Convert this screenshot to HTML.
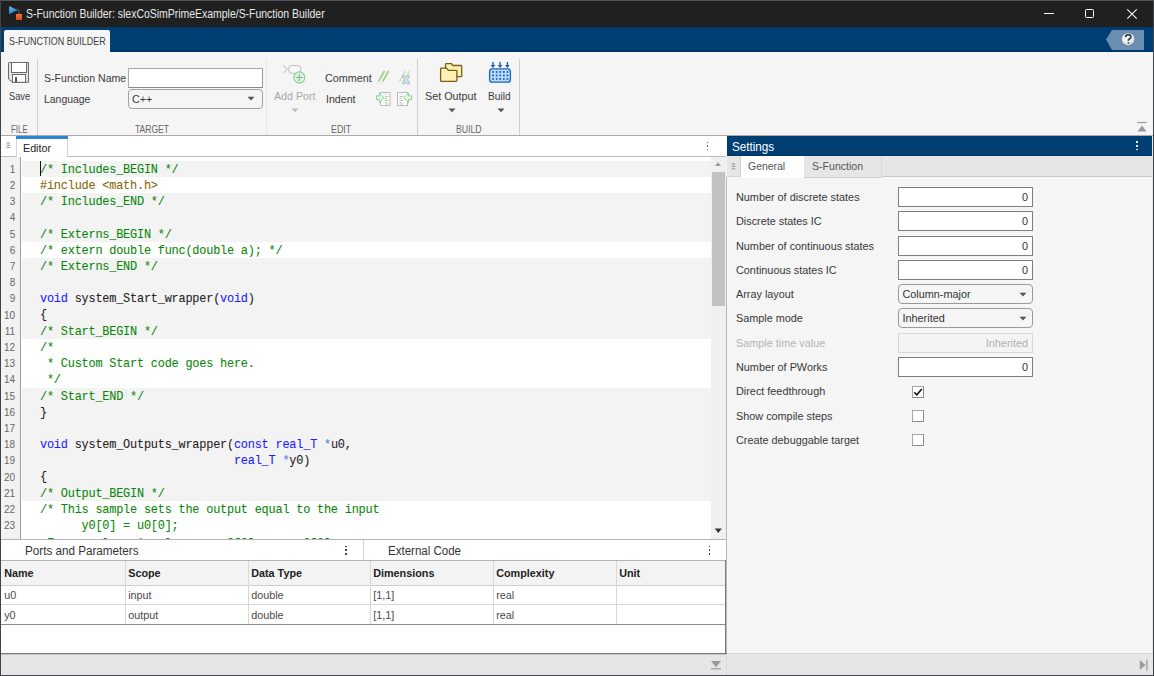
<!DOCTYPE html>
<html><head><meta charset="utf-8">
<style>
*{margin:0;padding:0;box-sizing:border-box}
html,body{width:1154px;height:676px;overflow:hidden;background:#f5f5f5;font-family:"Liberation Sans",sans-serif;}
.a{position:absolute}
#win{position:absolute;left:0;top:0;width:1154px;height:676px;overflow:hidden}
.t{position:absolute;white-space:pre;line-height:1}
.m{font-family:"Liberation Mono",monospace}
svg{position:absolute;overflow:visible}
</style></head><body><div id="win">
<div class="a" style="left:0px;top:0px;width:1154px;height:27px;background:#202020"></div>
<div class="a" style="left:0px;top:0px;width:1154px;height:1px;background:#50555c"></div>
<svg style="left:0;top:0" width="40" height="27" viewBox="0 0 40 27">
<defs><linearGradient id="gb" x1="0" y1="0" x2="1" y2="1"><stop offset="0" stop-color="#5fc3f0"/><stop offset="1" stop-color="#1a6fc0"/></linearGradient>
<linearGradient id="go" x1="0" y1="0" x2="0" y2="1"><stop offset="0" stop-color="#f07a3a"/><stop offset="1" stop-color="#d9441a"/></linearGradient></defs>
<path d="M8.5 10 L17.5 10 L19 10 L19 15" stroke="#555" stroke-width="1.2" fill="none"/>
<path d="M9.2 6 L17.5 9.9 L9.2 13.9 Z" fill="url(#gb)"/>
<rect x="16" y="14" width="6" height="6" fill="url(#go)"/>
</svg>
<div class="t" style="left:26.00px;top:8px;font-size:12.3px;color:#e8e8e8;transform:scaleX(0.8501);transform-origin:0 0;">S-Function Builder: slexCoSimPrimeExample/S-Function Builder</div>
<div class="a" style="left:1043.5px;top:13px;width:10px;height:1px;background:#fff"></div>
<div class="a" style="left:1085px;top:9px;width:9px;height:9px;border:1px solid #fff;border-radius:1.5px"></div>
<svg style="left:1127px;top:9px" width="10" height="10" viewBox="0 0 10 10"><path d="M0.3 0.3 L9.7 9.7 M9.7 0.3 L0.3 9.7" stroke="#fff" stroke-width="1.05"/></svg>
<div class="a" style="left:0px;top:27px;width:1154px;height:25px;background:linear-gradient(#003a6b 0,#003f74 3px,#003f74 22px,#002f62 25px)"></div>
<div class="a" style="left:4px;top:30px;width:106px;height:22px;background:#f5f5f5;border-radius:2px 2px 0 0"></div>
<div class="t" style="left:8.80px;top:36px;font-size:11.3px;color:#404040;transform:scaleX(0.7940);transform-origin:0 0;">S-FUNCTION BUILDER</div>
<svg style="left:1100px;top:27px" width="54" height="25" viewBox="1100 27 54 25">
<defs><radialGradient id="gh" cx="0.4" cy="0.3" r="0.8"><stop offset="0" stop-color="#ffffff"/><stop offset="0.6" stop-color="#e8ecf0"/><stop offset="1" stop-color="#a8b0b8"/></radialGradient></defs>
<path d="M1106 39.5 L1112 30 L1144 30 L1144 50 L1112 50 Z" fill="#6a8eb1"/>
<circle cx="1128.2" cy="39.5" r="6.8" fill="#2a3e55" opacity="0.5"/>
<circle cx="1128.2" cy="39.3" r="6.4" fill="url(#gh)"/>
<path d="M1125.6 37.2 Q1125.8 34.6 1128.3 34.6 Q1130.9 34.7 1130.8 36.9 Q1130.7 38.3 1129.3 39 Q1128.4 39.5 1128.4 40.8" stroke="#3b4450" stroke-width="1.9" fill="none"/>
<circle cx="1128.4" cy="42.8" r="0.9" fill="#3b4450"/>
</svg>
<div class="a" style="left:0px;top:52px;width:1154px;height:83px;background:#f5f5f5"></div>
<div class="a" style="left:0px;top:135px;width:1154px;height:1px;background:#a9a9a9"></div>
<div class="a" style="left:37px;top:59px;width:1px;height:76px;background:#cdcdcd"></div>
<div class="a" style="left:417px;top:59px;width:1px;height:76px;background:#cdcdcd"></div>
<div class="a" style="left:519px;top:59px;width:1px;height:76px;background:#cdcdcd"></div>
<div class="a" style="left:266px;top:59px;width:1px;height:76px;background:#e6e6e6"></div>
<svg style="left:0;top:52px" width="40" height="40" viewBox="0 52 40 40">
<path d="M9 62.5 L28.5 62.5 L28.5 82.3 L12.5 82.3 L8.5 79 L8.5 63 Z" fill="#e2e2e2" stroke="#6a6a6a" stroke-width="1"/>
<rect x="11.5" y="62.5" width="15" height="10" fill="#fff" stroke="#6a6a6a" stroke-width="1"/>
<rect x="12.5" y="74.5" width="13" height="7.8" fill="#fff" stroke="#6a6a6a" stroke-width="1"/>
<rect x="15" y="77" width="2" height="5" fill="#555"/>
</svg>
<div class="t" style="left:8.50px;top:91px;font-size:11.3px;color:#3a3a3a;transform:scaleX(0.8232);transform-origin:0 0;">Save</div>
<div class="t" style="left:10.90px;top:124px;font-size:11px;color:#666;transform:scaleX(0.7188);transform-origin:0 0;">FILE</div>
<div class="t" style="left:43.90px;top:73px;font-size:11.3px;color:#3a3a3a;transform:scaleX(0.9349);transform-origin:0 0;">S-Function Name</div>
<div class="t" style="left:43.90px;top:94px;font-size:11.3px;color:#3a3a3a;transform:scaleX(0.9229);transform-origin:0 0;">Language</div>
<div class="a" style="left:128px;top:68px;width:135px;height:20px;background:#fff;border:1px solid #a8a8a8;border-bottom-color:#8a8a8a;border-right-color:#9a9a9a"></div>
<div class="a" style="left:128px;top:89px;width:135px;height:20px;background:#f5f5f5;border:1px solid #a0a0a0;border-radius:4px"></div>
<div class="t" style="left:132.20px;top:94px;font-size:11.3px;color:#3a3a3a;transform:scaleX(0.9552);transform-origin:0 0;">C++</div>
<svg style="left:247px;top:96px" width="8" height="5" viewBox="0 0 8 5"><path d="M0.5 0.8 L7.5 0.8 L4 4.6 Z" fill="#555"/></svg>
<div class="t" style="left:134.70px;top:124px;font-size:11px;color:#666;transform:scaleX(0.7764);transform-origin:0 0;">TARGET</div>
<svg style="left:270px;top:58px" width="40" height="30" viewBox="270 58 40 30">
<path d="M283.2 65.5 L287.2 69.3 L283.2 73" stroke="#b4b4b4" stroke-width="1" fill="none"/>
<rect x="288.5" y="65.5" width="12.3" height="7.8" rx="3.6" fill="#f8f8f8" stroke="#bcbcbc" stroke-width="1"/>
<circle cx="299.3" cy="77.5" r="5.6" fill="#def3df" stroke="#86cf95" stroke-width="1.1"/>
<path d="M295.8 77.5 L302.8 77.5 M299.3 74 L299.3 81" stroke="#8fad95" stroke-width="1.1"/>
</svg>
<div class="t" style="left:273.90px;top:91px;font-size:11.3px;color:#a8a8a8;transform:scaleX(0.9416);transform-origin:0 0;">Add Port</div>
<svg style="left:291px;top:108px" width="8" height="5" viewBox="0 0 8 5"><path d="M0.5 0.6 L7.5 0.6 L4 4.2 Z" fill="#bdbdbd"/></svg>
<div class="t" style="left:325.20px;top:73px;font-size:11.3px;color:#3a3a3a;transform:scaleX(0.9554);transform-origin:0 0;">Comment</div>
<div class="t" style="left:325.50px;top:94px;font-size:11.3px;color:#3a3a3a;transform:scaleX(0.9391);transform-origin:0 0;">Indent</div>
<svg style="left:370px;top:60px" width="50" height="50" viewBox="370 60 50 50">
<path d="M384.4 71 L378.4 81.6 M388.6 71 L382.6 81.6" stroke="#a9d08f" stroke-width="1.9"/>
<path d="M376.5 83.5 L383.5 83.5" stroke="#e4e4e4" stroke-width="0.8"/>
<path d="M405.4 71 L399.4 81.6 M409.6 71 L403.6 81.6" stroke="#cfe3bd" stroke-width="1.7"/>
<path d="M402.3 76.3 L404.2 75.6 L406 77.6 L407.8 75.6 L409.7 76.3 L407.5 79.9 L409.7 83.3 L407.8 84.2 L406 82.1 L404.2 84.2 L402.3 83.3 L404.5 79.9 Z" fill="#d3e3ef" stroke="#9fb0c2" stroke-width="0.9"/>
<rect x="380.5" y="92.5" width="9.5" height="13" fill="#fff" stroke="#bababa" stroke-width="1"/>
<path d="M383.5 94.5 L388 94.5" stroke="#e0e0e0" stroke-width="0.9"/>
<path d="M385 96.5 L388.5 96.5 M385 98.5 L387 98.5 M385 100.5 L388.5 100.5 M385 102.5 L386.5 102.5 M385 104 L388.5 104" stroke="#9fc89f" stroke-width="0.9"/>
<path d="M376.5 95.8 L379.5 95.8 L379.5 92.9 L383.9 97.7 L379.5 102.5 L379.5 99.6 L376.5 99.6 Z" fill="#e2f6e2" stroke="#8fd19c" stroke-width="1"/>
<rect x="397.5" y="92.5" width="10" height="13" fill="#fff" stroke="#bababa" stroke-width="1"/>
<path d="M399.5 94.5 L403.5 94.5" stroke="#e0e0e0" stroke-width="0.9"/>
<path d="M399.5 96.5 L403 96.5 M399.5 98.5 L401.5 98.5 M399.5 100.5 L403 100.5 M399.5 102.5 L401 102.5 M399.5 104 L403 104" stroke="#9fc89f" stroke-width="0.9"/>
<path d="M411.5 95.8 L408.5 95.8 L408.5 92.9 L403.9 97.7 L408.5 102.5 L408.5 99.6 L411.5 99.6 Z" fill="#e2f6e2" stroke="#8fd19c" stroke-width="1"/>
</svg>
<div class="t" style="left:331.20px;top:124px;font-size:11px;color:#666;transform:scaleX(0.8061);transform-origin:0 0;">EDIT</div>
<svg style="left:430px;top:58px" width="90" height="30" viewBox="430 58 90 30">
<path d="M445.5 76.5 L445.5 64.2 Q445.5 63.6 446.1 63.6 L451.5 63.6 L453 65.5 L461 65.5 Q461.7 65.5 461.7 66.2 L461.7 76 Q461.7 76.6 461 76.6 Z" fill="#fbefb0" stroke="#7d5e12" stroke-width="1.3"/>
<path d="M440.6 81.2 L440.6 68.8 Q440.6 68.2 441.2 68.2 L446.5 68.2 L448.4 70.4 L456.2 70.4 Q456.9 70.4 456.9 71.1 L456.9 80.6 Q456.9 81.3 456.2 81.3 L441.2 81.3 Q440.6 81.3 440.6 80.7 Z" fill="#fdf1b4" stroke="#7d5e12" stroke-width="1.3"/>
<rect x="489.6" y="68.8" width="20.8" height="13.4" rx="2.8" fill="#b7dbff" stroke="#1f63b8" stroke-width="1.3"/>
<g fill="#1a58a8">
<rect x="492.2" y="71.1" width="1.7" height="1.7"/><rect x="495.8" y="71.1" width="1.7" height="1.7"/><rect x="499.4" y="71.1" width="1.7" height="1.7"/><rect x="503" y="71.1" width="1.7" height="1.7"/><rect x="506.6" y="71.1" width="1.7" height="1.7"/>
<rect x="492.2" y="74.6" width="1.7" height="1.7"/><rect x="495.8" y="74.6" width="1.7" height="1.7"/><rect x="499.4" y="74.6" width="1.7" height="1.7"/><rect x="503" y="74.6" width="1.7" height="1.7"/><rect x="506.6" y="74.6" width="1.7" height="1.7"/>
<rect x="492.2" y="78.1" width="1.7" height="1.7"/><rect x="495.8" y="78.1" width="1.7" height="1.7"/><rect x="499.4" y="78.1" width="1.7" height="1.7"/><rect x="503" y="78.1" width="1.7" height="1.7"/><rect x="506.6" y="78.1" width="1.7" height="1.7"/>
</g>
<g fill="#1a5cb0">
<path d="M492.3 62 L493.7 62 L493.7 65 L495.3 65 L493 68 L490.7 65 L492.3 65 Z"/>
<path d="M499.4 62 L500.8 62 L500.8 65 L502.4 65 L500.1 68 L497.8 65 L499.4 65 Z"/>
<path d="M506.7 62 L508.1 62 L508.1 65 L509.7 65 L507.4 68 L505.1 65 L506.7 65 Z"/>
</g>
</svg>
<div class="t" style="left:424.50px;top:91px;font-size:11.3px;color:#3a3a3a;transform:scaleX(0.9533);transform-origin:0 0;">Set Output</div>
<div class="t" style="left:488.40px;top:91px;font-size:11.3px;color:#3a3a3a;transform:scaleX(0.8993);transform-origin:0 0;">Build</div>
<svg style="left:448px;top:108px" width="8" height="5" viewBox="0 0 8 5"><path d="M0.5 0.6 L7.5 0.6 L4 4.2 Z" fill="#555"/></svg>
<svg style="left:496.5px;top:108px" width="8" height="5" viewBox="0 0 8 5"><path d="M0.5 0.6 L7.5 0.6 L4 4.2 Z" fill="#555"/></svg>
<div class="t" style="left:455.80px;top:124px;font-size:11px;color:#666;transform:scaleX(0.7872);transform-origin:0 0;">BUILD</div>
<svg style="left:1136px;top:121px" width="12" height="12" viewBox="0 0 12 12"><path d="M1.5 1.5 L10.5 1.5" stroke="#9a9a9a" stroke-width="1.2"/><path d="M1.5 10.5 L10.5 10.5 L6 4.5 Z" fill="#9a9a9a"/></svg>
<div class="a" style="left:1px;top:136px;width:725px;height:518px;background:#fff"></div>
<div class="a" style="left:1px;top:156px;width:725px;height:1px;background:#bdbdbd"></div>
<div class="a" style="left:1px;top:136px;width:15px;height:20px;background:#fff"></div>
<svg style="left:6px;top:142px" width="5" height="8" viewBox="0 0 5 8"><path d="M0.5 1 L4 1 M0.5 3.2 L4 3.2 M0.5 5.4 L4 5.4" stroke="#8a8a8a" stroke-width="1"/></svg>
<div class="a" style="left:16px;top:136px;width:52px;height:21px;background:#fff;border-left:1px solid #d4d4d4;border-right:1px solid #d4d4d4"></div>
<div class="a" style="left:16px;top:136px;width:52px;height:3px;background:#2b86d9"></div>
<div class="t" style="left:22.60px;top:143px;font-size:11.3px;color:#222;transform:scaleX(0.9487);transform-origin:0 0;">Editor</div>
<div class="a" style="left:706.5px;top:141.60000000000002px;width:1.6px;height:1.6px;background:#444;border-radius:0.5px"></div>
<div class="a" style="left:706.5px;top:145.3px;width:1.6px;height:1.6px;background:#444;border-radius:0.5px"></div>
<div class="a" style="left:706.5px;top:148.9px;width:1.6px;height:1.6px;background:#444;border-radius:0.5px"></div>
<div class="a" style="left:1px;top:157px;width:19px;height:382px;background:#f2f2f2"></div>
<div class="a" style="left:20px;top:157px;width:1px;height:382px;background:#9c9c9c"></div>
<div class="a" style="left:21px;top:157px;width:690px;height:382px;overflow:hidden">
<div class="a" style="left:1px;top:3.80px;width:689px;height:16.5px;background:#f3f3f3"></div>
<div class="a" style="left:1px;top:20.00px;width:689px;height:16.5px;background:#ffffff"></div>
<div class="a" style="left:1px;top:36.20px;width:689px;height:16.5px;background:#f3f3f3"></div>
<div class="a" style="left:1px;top:52.40px;width:689px;height:16.5px;background:#f3f3f3"></div>
<div class="a" style="left:1px;top:68.60px;width:689px;height:16.5px;background:#f3f3f3"></div>
<div class="a" style="left:1px;top:84.80px;width:689px;height:16.5px;background:#ffffff"></div>
<div class="a" style="left:1px;top:101.00px;width:689px;height:16.5px;background:#f3f3f3"></div>
<div class="a" style="left:1px;top:117.20px;width:689px;height:16.5px;background:#f3f3f3"></div>
<div class="a" style="left:1px;top:133.40px;width:689px;height:16.5px;background:#f3f3f3"></div>
<div class="a" style="left:1px;top:149.60px;width:689px;height:16.5px;background:#f3f3f3"></div>
<div class="a" style="left:1px;top:165.80px;width:689px;height:16.5px;background:#f3f3f3"></div>
<div class="a" style="left:1px;top:182.00px;width:689px;height:16.5px;background:#ffffff"></div>
<div class="a" style="left:1px;top:198.20px;width:689px;height:16.5px;background:#ffffff"></div>
<div class="a" style="left:1px;top:214.40px;width:689px;height:16.5px;background:#ffffff"></div>
<div class="a" style="left:1px;top:230.60px;width:689px;height:16.5px;background:#f3f3f3"></div>
<div class="a" style="left:1px;top:246.80px;width:689px;height:16.5px;background:#f3f3f3"></div>
<div class="a" style="left:1px;top:263.00px;width:689px;height:16.5px;background:#f3f3f3"></div>
<div class="a" style="left:1px;top:279.20px;width:689px;height:16.5px;background:#f3f3f3"></div>
<div class="a" style="left:1px;top:295.40px;width:689px;height:16.5px;background:#f3f3f3"></div>
<div class="a" style="left:1px;top:311.60px;width:689px;height:16.5px;background:#f3f3f3"></div>
<div class="a" style="left:1px;top:327.80px;width:689px;height:16.5px;background:#f3f3f3"></div>
<div class="a" style="left:1px;top:344.00px;width:689px;height:16.5px;background:#ffffff"></div>
<div class="a" style="left:1px;top:360.20px;width:689px;height:16.5px;background:#ffffff"></div>
<div class="a" style="left:1px;top:376.40px;width:689px;height:16.5px;background:#ffffff"></div>
<div class="t m" style="left:19px;top:8.00px;font-size:11.9px;letter-spacing:-0.21px;-webkit-text-stroke:0.08px currentColor;color:#222"><span style="color:#0a870a">/* Includes_BEGIN */</span></div>
<div class="t m" style="left:19px;top:24.00px;font-size:11.9px;letter-spacing:-0.21px;-webkit-text-stroke:0.08px currentColor;color:#222"><span style="color:#8a6406">#include &lt;math.h&gt;</span></div>
<div class="t m" style="left:19px;top:40.00px;font-size:11.9px;letter-spacing:-0.21px;-webkit-text-stroke:0.08px currentColor;color:#222"><span style="color:#0a870a">/* Includes_END */</span></div>
<div class="t m" style="left:19px;top:73.00px;font-size:11.9px;letter-spacing:-0.21px;-webkit-text-stroke:0.08px currentColor;color:#222"><span style="color:#0a870a">/* Externs_BEGIN */</span></div>
<div class="t m" style="left:19px;top:89.00px;font-size:11.9px;letter-spacing:-0.21px;-webkit-text-stroke:0.08px currentColor;color:#222"><span style="color:#0a870a">/* extern double func(double a); */</span></div>
<div class="t m" style="left:19px;top:105.00px;font-size:11.9px;letter-spacing:-0.21px;-webkit-text-stroke:0.08px currentColor;color:#222"><span style="color:#0a870a">/* Externs_END */</span></div>
<div class="t m" style="left:19px;top:137.00px;font-size:11.9px;letter-spacing:-0.21px;-webkit-text-stroke:0.08px currentColor;color:#222"><span style="color:#2020ff">void</span> system_Start_wrapper(<span style="color:#2020ff">void</span>)</div>
<div class="t m" style="left:19px;top:153.00px;font-size:11.9px;letter-spacing:-0.21px;-webkit-text-stroke:0.08px currentColor;color:#222">{</div>
<div class="t m" style="left:19px;top:170.00px;font-size:11.9px;letter-spacing:-0.21px;-webkit-text-stroke:0.08px currentColor;color:#222"><span style="color:#0a870a">/* Start_BEGIN */</span></div>
<div class="t m" style="left:19px;top:186.00px;font-size:11.9px;letter-spacing:-0.21px;-webkit-text-stroke:0.08px currentColor;color:#222"><span style="color:#0a870a">/*</span></div>
<div class="t m" style="left:19px;top:202.00px;font-size:11.9px;letter-spacing:-0.21px;-webkit-text-stroke:0.08px currentColor;color:#222"><span style="color:#0a870a"> * Custom Start code goes here.</span></div>
<div class="t m" style="left:19px;top:218.00px;font-size:11.9px;letter-spacing:-0.21px;-webkit-text-stroke:0.08px currentColor;color:#222"><span style="color:#0a870a"> */</span></div>
<div class="t m" style="left:19px;top:235.00px;font-size:11.9px;letter-spacing:-0.21px;-webkit-text-stroke:0.08px currentColor;color:#222"><span style="color:#0a870a">/* Start_END */</span></div>
<div class="t m" style="left:19px;top:251.00px;font-size:11.9px;letter-spacing:-0.21px;-webkit-text-stroke:0.08px currentColor;color:#222">}</div>
<div class="t m" style="left:19px;top:283.00px;font-size:11.9px;letter-spacing:-0.21px;-webkit-text-stroke:0.08px currentColor;color:#222"><span style="color:#2020ff">void</span> system_Outputs_wrapper(<span style="color:#2020ff">const</span> <span style="color:#2020ff">real_T</span> <span style="color:#4a7fd8">*</span>u0,</div>
<div class="t m" style="left:19px;top:299.00px;font-size:11.9px;letter-spacing:-0.21px;-webkit-text-stroke:0.08px currentColor;color:#222">                            <span style="color:#2020ff">real_T</span> <span style="color:#4a7fd8">*</span>y0)</div>
<div class="t m" style="left:19px;top:315.00px;font-size:11.9px;letter-spacing:-0.21px;-webkit-text-stroke:0.08px currentColor;color:#222">{</div>
<div class="t m" style="left:19px;top:332.00px;font-size:11.9px;letter-spacing:-0.21px;-webkit-text-stroke:0.08px currentColor;color:#222"><span style="color:#0a870a">/* Output_BEGIN */</span></div>
<div class="t m" style="left:19px;top:348.00px;font-size:11.9px;letter-spacing:-0.21px;-webkit-text-stroke:0.08px currentColor;color:#222"><span style="color:#0a870a">/* This sample sets the output equal to the input</span></div>
<div class="t m" style="left:19px;top:364.00px;font-size:11.9px;letter-spacing:-0.21px;-webkit-text-stroke:0.08px currentColor;color:#222"><span style="color:#0a870a">      y0[0] = u0[0];</span></div>
<div class="t m" style="left:19px;top:382.00px;font-size:11.9px;letter-spacing:-0.21px;-webkit-text-stroke:0.08px currentColor;color:#222"><span style="color:#0a870a"> For complex signals use: y0[0].re = u0[0].re;</span></div>
</div>
<div class="a" style="left:1px;top:157px;width:19px;height:382px;overflow:hidden">
<div class="t" style="left:0;width:14.2px;text-align:right;top:8px;font-size:10px;color:#676767">1</div>
<div class="t" style="left:0;width:14.2px;text-align:right;top:24px;font-size:10px;color:#676767">2</div>
<div class="t" style="left:0;width:14.2px;text-align:right;top:40px;font-size:10px;color:#676767">3</div>
<div class="t" style="left:0;width:14.2px;text-align:right;top:56px;font-size:10px;color:#676767">4</div>
<div class="t" style="left:0;width:14.2px;text-align:right;top:73px;font-size:10px;color:#676767">5</div>
<div class="t" style="left:0;width:14.2px;text-align:right;top:89px;font-size:10px;color:#676767">6</div>
<div class="t" style="left:0;width:14.2px;text-align:right;top:105px;font-size:10px;color:#676767">7</div>
<div class="t" style="left:0;width:14.2px;text-align:right;top:121px;font-size:10px;color:#676767">8</div>
<div class="t" style="left:0;width:14.2px;text-align:right;top:137px;font-size:10px;color:#676767">9</div>
<div class="t" style="left:0;width:14.2px;text-align:right;top:154px;font-size:10px;color:#676767">10</div>
<div class="t" style="left:0;width:14.2px;text-align:right;top:170px;font-size:10px;color:#676767">11</div>
<div class="t" style="left:0;width:14.2px;text-align:right;top:186px;font-size:10px;color:#676767">12</div>
<div class="t" style="left:0;width:14.2px;text-align:right;top:202px;font-size:10px;color:#676767">13</div>
<div class="t" style="left:0;width:14.2px;text-align:right;top:218px;font-size:10px;color:#676767">14</div>
<div class="t" style="left:0;width:14.2px;text-align:right;top:235px;font-size:10px;color:#676767">15</div>
<div class="t" style="left:0;width:14.2px;text-align:right;top:251px;font-size:10px;color:#676767">16</div>
<div class="t" style="left:0;width:14.2px;text-align:right;top:267px;font-size:10px;color:#676767">17</div>
<div class="t" style="left:0;width:14.2px;text-align:right;top:283px;font-size:10px;color:#676767">18</div>
<div class="t" style="left:0;width:14.2px;text-align:right;top:299px;font-size:10px;color:#676767">19</div>
<div class="t" style="left:0;width:14.2px;text-align:right;top:316px;font-size:10px;color:#676767">20</div>
<div class="t" style="left:0;width:14.2px;text-align:right;top:332px;font-size:10px;color:#676767">21</div>
<div class="t" style="left:0;width:14.2px;text-align:right;top:348px;font-size:10px;color:#676767">22</div>
<div class="t" style="left:0;width:14.2px;text-align:right;top:364px;font-size:10px;color:#676767">23</div>
</div>
<div class="a" style="left:40px;top:161px;width:1px;height:15px;background:#111"></div>
<div class="a" style="left:711px;top:157px;width:15px;height:382px;background:#f0f0f0"></div>
<svg style="left:714px;top:161px" width="8" height="6" viewBox="0 0 8 6"><path d="M1 5 L7 5 L4 1.3 Z" fill="#999"/></svg>
<div class="a" style="left:712px;top:172px;width:12.5px;height:134px;background:#c2c2c2"></div>
<svg style="left:714px;top:528px" width="8" height="6" viewBox="0 0 8 6"><path d="M0.8 0.6 L7.8 0.6 L4.3 4.9 Z" fill="#333"/></svg>
<div class="a" style="left:726px;top:177px;width:1px;height:477px;background:#b8b8b8"></div>
<div class="a" style="left:1px;top:539px;width:725px;height:1px;background:#b4b4b4"></div>
<div class="a" style="left:727px;top:136px;width:426px;height:518px;background:#f5f5f5"></div>
<div class="a" style="left:727px;top:136px;width:426px;height:20px;background:linear-gradient(#003f74 0,#003f74 18px,#00305f 20px)"></div>
<div class="t" style="left:731.70px;top:141px;font-size:12.5px;color:#ffffff;transform:scaleX(0.9344);transform-origin:0 0;">Settings</div>
<div class="a" style="left:1136.3px;top:141.2px;width:1.7px;height:1.7px;background:#fff;border-radius:0.5px"></div>
<div class="a" style="left:1136.3px;top:144.89999999999998px;width:1.7px;height:1.7px;background:#fff;border-radius:0.5px"></div>
<div class="a" style="left:1136.3px;top:148.5px;width:1.7px;height:1.7px;background:#fff;border-radius:0.5px"></div>
<div class="a" style="left:727px;top:156px;width:426px;height:21px;background:#e6e6e6"></div>
<div class="a" style="left:727px;top:156px;width:14px;height:21px;background:#e6e6e6;border-right:1px solid #d0d0d0"></div>
<svg style="left:731px;top:163px" width="5" height="8" viewBox="0 0 5 8"><path d="M0.8 1 L4.2 1 M0.8 3.4 L4.2 3.4 M0.8 5.8 L4.2 5.8" stroke="#8a8a8a" stroke-width="1"/></svg>
<div class="a" style="left:741px;top:156px;width:63px;height:22px;background:#fff"></div>
<div class="a" style="left:804px;top:156px;width:78px;height:21px;background:#e6e6e6;border-right:1px solid #d8d8d8"></div>
<div class="a" style="left:882px;top:176px;width:270px;height:1px;background:#c8c8c8"></div>
<div class="a" style="left:727px;top:176px;width:14px;height:1px;background:#d4d4d4"></div>
<div class="a" style="left:804px;top:177px;width:78px;height:1px;background:#cfcfcf"></div>
<div class="t" style="left:747.90px;top:161px;font-size:11.3px;color:#555;transform:scaleX(0.9252);transform-origin:0 0;">General</div>
<div class="t" style="left:811.80px;top:161px;font-size:11.3px;color:#555;transform:scaleX(0.9353);transform-origin:0 0;">S-Function</div>
<div class="t" style="left:736px;top:192.00px;font-size:10.85px;color:#383838;">Number of discrete states</div>
<div class="a" style="left:898px;top:187px;width:135px;height:20px;background:#fff;border:1px solid #7f7f7f"></div>
<div class="t" style="left:898px;top:192.00px;font-size:10.85px;color:#333;width:130px;text-align:right;">0</div>
<div class="t" style="left:736px;top:216.00px;font-size:10.85px;color:#383838;">Discrete states IC</div>
<div class="a" style="left:898px;top:211px;width:135px;height:20px;background:#fff;border:1px solid #7f7f7f"></div>
<div class="t" style="left:898px;top:216.00px;font-size:10.85px;color:#333;width:130px;text-align:right;">0</div>
<div class="t" style="left:736px;top:241.00px;font-size:10.85px;color:#383838;">Number of continuous states</div>
<div class="a" style="left:898px;top:236px;width:135px;height:20px;background:#fff;border:1px solid #7f7f7f"></div>
<div class="t" style="left:898px;top:241.00px;font-size:10.85px;color:#333;width:130px;text-align:right;">0</div>
<div class="t" style="left:736px;top:265.00px;font-size:10.85px;color:#383838;">Continuous states IC</div>
<div class="a" style="left:898px;top:260px;width:135px;height:20px;background:#fff;border:1px solid #7f7f7f"></div>
<div class="t" style="left:898px;top:265.00px;font-size:10.85px;color:#333;width:130px;text-align:right;">0</div>
<div class="t" style="left:736px;top:289.00px;font-size:10.85px;color:#383838;">Array layout</div>
<div class="a" style="left:898px;top:284px;width:135px;height:20px;background:#f5f5f5;border:1px solid #9a9a9a;border-radius:4px"></div>
<div class="t" style="left:902.5px;top:289.00px;font-size:10.85px;color:#333;">Column-major</div>
<svg style="left:1018.5px;top:292px" width="8" height="5" viewBox="0 0 8 5"><path d="M0.5 0.8 L7.5 0.8 L4 4.4 Z" fill="#555"/></svg>
<div class="t" style="left:736px;top:313.00px;font-size:10.85px;color:#383838;">Sample mode</div>
<div class="a" style="left:898px;top:308px;width:135px;height:20px;background:#f5f5f5;border:1px solid #9a9a9a;border-radius:4px"></div>
<div class="t" style="left:902.5px;top:313.00px;font-size:10.85px;color:#333;">Inherited</div>
<svg style="left:1018.5px;top:316px" width="8" height="5" viewBox="0 0 8 5"><path d="M0.5 0.8 L7.5 0.8 L4 4.4 Z" fill="#555"/></svg>
<div class="t" style="left:736px;top:338.00px;font-size:10.85px;color:#b4b4b4;">Sample time value</div>
<div class="a" style="left:898px;top:333px;width:135px;height:20px;background:#f4f4f4;border:1px solid #d8d8d8"></div>
<div class="t" style="left:898px;top:338.00px;font-size:10.85px;color:#b0b0b0;width:130px;text-align:right;">Inherited</div>
<div class="t" style="left:736px;top:362.00px;font-size:10.85px;color:#383838;">Number of PWorks</div>
<div class="a" style="left:898px;top:357px;width:135px;height:20px;background:#fff;border:1px solid #7f7f7f"></div>
<div class="t" style="left:898px;top:362.00px;font-size:10.85px;color:#333;width:130px;text-align:right;">0</div>
<div class="t" style="left:736px;top:386.00px;font-size:10.85px;color:#383838;">Direct feedthrough</div>
<div class="a" style="left:912px;top:386px;width:12px;height:12px;background:#fff;border:1px solid #a4a4a4;border-right-color:#8a8a8a;border-bottom-color:#8a8a8a"></div>
<svg style="left:912px;top:386px" width="12" height="12" viewBox="0 0 12 12"><path d="M2.3 6.2 L4.8 8.8 L9.8 2.9" stroke="#111" stroke-width="1.5" fill="none"/></svg>
<div class="t" style="left:736px;top:411.00px;font-size:10.85px;color:#383838;">Show compile steps</div>
<div class="a" style="left:912px;top:410px;width:12px;height:12px;background:#fff;border:1px solid #a4a4a4;border-right-color:#8a8a8a;border-bottom-color:#8a8a8a"></div>
<div class="t" style="left:736px;top:435.00px;font-size:10.85px;color:#383838;">Create debuggable target</div>
<div class="a" style="left:912px;top:434px;width:12px;height:12px;background:#fff;border:1px solid #a4a4a4;border-right-color:#8a8a8a;border-bottom-color:#8a8a8a"></div>
<div class="a" style="left:1152px;top:136px;width:1px;height:518px;background:#e8e8e8"></div>
<div class="a" style="left:1px;top:540px;width:725px;height:113px;background:#fff"></div>
<div class="a" style="left:363px;top:540px;width:1px;height:20px;background:#d0d0d0"></div>
<div class="t" style="left:24.80px;top:545px;font-size:12px;color:#333;transform:scaleX(0.9724);transform-origin:0 0;">Ports and Parameters</div>
<div class="t" style="left:387.50px;top:545px;font-size:12px;color:#333;transform:scaleX(0.9600);transform-origin:0 0;">External Code</div>
<div class="a" style="left:345.2px;top:545.7px;width:1.6px;height:1.6px;background:#444"></div>
<div class="a" style="left:345.2px;top:549.4000000000001px;width:1.6px;height:1.6px;background:#444"></div>
<div class="a" style="left:345.2px;top:553.0px;width:1.6px;height:1.6px;background:#444"></div>
<div class="a" style="left:708.7px;top:545.7px;width:1.6px;height:1.6px;background:#444"></div>
<div class="a" style="left:708.7px;top:549.4000000000001px;width:1.6px;height:1.6px;background:#444"></div>
<div class="a" style="left:708.7px;top:553.0px;width:1.6px;height:1.6px;background:#444"></div>
<div class="a" style="left:1px;top:560px;width:725px;height:1px;background:#b4b4b4"></div>
<div class="a" style="left:1px;top:561px;width:725px;height:24px;background:#f3f3f3"></div>
<div class="a" style="left:1px;top:585px;width:725px;height:1px;background:#cfcfcf"></div>
<div class="a" style="left:1px;top:604px;width:725px;height:1px;background:#d6d6d6"></div>
<div class="a" style="left:1px;top:624px;width:725px;height:1px;background:#8c8c8c"></div>
<div class="t" style="left:4.2px;top:568.00px;font-size:10.8px;color:#222;font-weight:bold;">Name</div>
<div class="t" style="left:4.2px;top:590.00px;font-size:10.8px;color:#4a4a4a;">u0</div>
<div class="t" style="left:4.2px;top:610.00px;font-size:10.8px;color:#4a4a4a;">y0</div>
<div class="a" style="left:125px;top:561px;width:1px;height:63px;background:#d8d8d8"></div>
<div class="t" style="left:128.2px;top:568.00px;font-size:10.8px;color:#222;font-weight:bold;">Scope</div>
<div class="t" style="left:128.2px;top:590.00px;font-size:10.8px;color:#4a4a4a;">input</div>
<div class="t" style="left:128.2px;top:610.00px;font-size:10.8px;color:#4a4a4a;">output</div>
<div class="a" style="left:248px;top:561px;width:1px;height:63px;background:#d8d8d8"></div>
<div class="t" style="left:251.2px;top:568.00px;font-size:10.8px;color:#222;font-weight:bold;">Data Type</div>
<div class="t" style="left:251.2px;top:590.00px;font-size:10.8px;color:#4a4a4a;">double</div>
<div class="t" style="left:251.2px;top:610.00px;font-size:10.8px;color:#4a4a4a;">double</div>
<div class="a" style="left:370px;top:561px;width:1px;height:63px;background:#d8d8d8"></div>
<div class="t" style="left:373.2px;top:568.00px;font-size:10.8px;color:#222;font-weight:bold;">Dimensions</div>
<div class="t" style="left:373.2px;top:590.00px;font-size:10.8px;color:#4a4a4a;">[1,1]</div>
<div class="t" style="left:373.2px;top:610.00px;font-size:10.8px;color:#4a4a4a;">[1,1]</div>
<div class="a" style="left:493px;top:561px;width:1px;height:63px;background:#d8d8d8"></div>
<div class="t" style="left:496.2px;top:568.00px;font-size:10.8px;color:#222;font-weight:bold;">Complexity</div>
<div class="t" style="left:496.2px;top:590.00px;font-size:10.8px;color:#4a4a4a;">real</div>
<div class="t" style="left:496.2px;top:610.00px;font-size:10.8px;color:#4a4a4a;">real</div>
<div class="a" style="left:616px;top:561px;width:1px;height:63px;background:#d8d8d8"></div>
<div class="t" style="left:619.2px;top:568.00px;font-size:10.8px;color:#222;font-weight:bold;">Unit</div>
<div class="t" style="left:619.2px;top:590.00px;font-size:10.8px;color:#4a4a4a;"></div>
<div class="t" style="left:619.2px;top:610.00px;font-size:10.8px;color:#4a4a4a;"></div>
<div class="a" style="left:725px;top:560px;width:1px;height:94px;background:#7a7a7a"></div>
<div class="a" style="left:0px;top:654px;width:1154px;height:21px;background:#e6e6e6"></div>
<div class="a" style="left:1px;top:653px;width:726px;height:1px;background:#7a7a7a"></div>
<div class="a" style="left:1px;top:654px;width:726px;height:1px;background:#c4c4c4"></div>
<div class="a" style="left:727px;top:653px;width:426px;height:1px;background:#d4d4d4"></div>
<div class="a" style="left:726px;top:654px;width:1px;height:21px;background:#dadada"></div>
<svg style="left:710px;top:660px" width="12" height="10" viewBox="0 0 12 10"><path d="M1 1 L11 1 L6 7.2 Z" fill="#9a9a9a"/><path d="M1 8.8 L11 8.8" stroke="#9a9a9a" stroke-width="1.2"/></svg>
<svg style="left:1139.2px;top:658.5px" width="10" height="12" viewBox="0 0 10 12"><path d="M0.8 1 L0.8 11 L6.5 6 Z" fill="#9a9a9a"/><path d="M7.9 0.6 L7.9 11.4" stroke="#9a9a9a" stroke-width="1.3"/></svg>
<div class="a" style="left:0px;top:0px;width:1px;height:676px;background:#3f444a"></div>
<div class="a" style="left:1153px;top:0px;width:1px;height:676px;background:#3f444a"></div>
<div class="a" style="left:0px;top:675px;width:1154px;height:1px;background:#3f444a"></div>
</div></body></html>
